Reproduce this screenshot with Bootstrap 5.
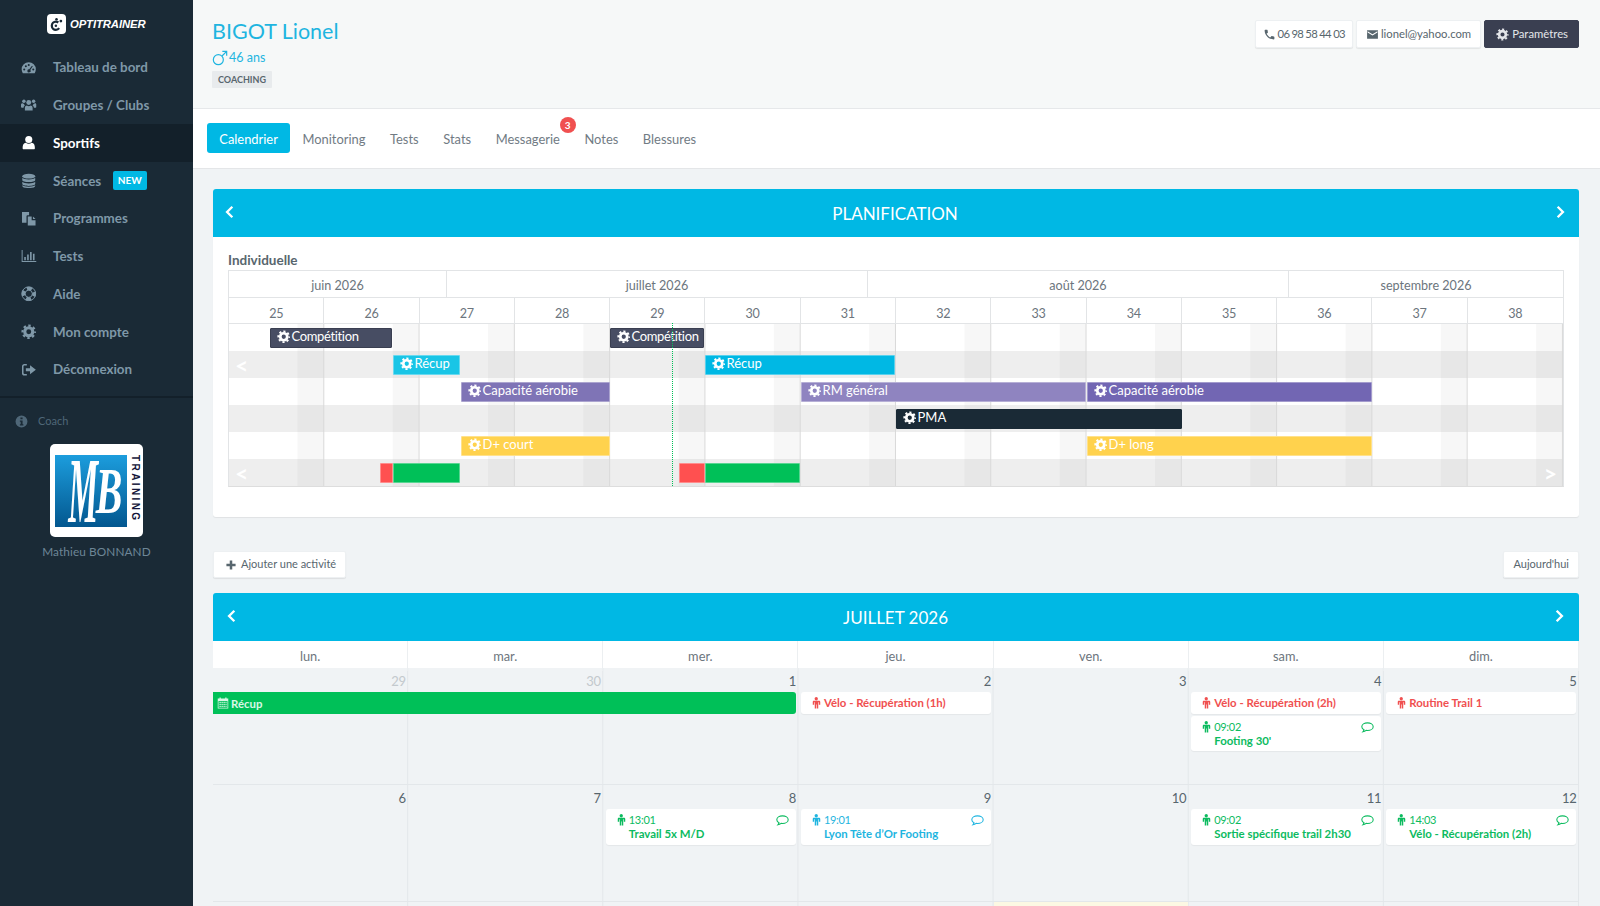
<!DOCTYPE html>
<html lang="fr">
<head>
<meta charset="UTF-8">
<title>Optitrainer - Calendrier</title>
<link href="https://cdn.jsdelivr.net/npm/bootstrap@5.3.3/dist/css/bootstrap.min.css" rel="stylesheet">
<style>
    html, body { height: 100%; }
    body { font-family: Lato, "Noto Sans", sans-serif; font-size: 14px; color: #58666e; background: #f0f3f5; overflow: hidden; }
    .ico { width: 1em; height: 1em; fill: currentColor; flex: none; }
    .ico-fig { width: 9px; height: 12px; fill: currentColor; flex: none; }
    .page { height: 906px; }

    /* sidebar */
    .side { width: 193px; flex: none; background: #1a2a36; color: #7f98a8; }
    .brand { height: 48.5px; padding-top: 14px; padding-left: 47px; gap: 4px; }
    .brand-mark { width: 19px; height: 20px; background: #fff; border-radius: 4px; color: #1a2a36; font-size: 15px; }
    .brand-name { color: #fff; font: italic bold 11.3px/20px "Liberation Sans", sans-serif; letter-spacing: -.1px; }
    .side-link { height: 37.75px; padding: 0 0 0 21px; color: #7f98a8; font-weight: 700; font-size: 13.4px; gap: 16.5px; }
    .side-link:hover { color: #7f98a8; }
    .side-link .ico { font-size: 15.5px; }
    .side-link.on { background: #13202a; color: #fff; }
    .new-tag { background: #00b8e4; color: #fff; font-size: 10px; padding: 2px 5px; border-radius: 2px; margin-left: -5px; }
    .side-nav { padding-bottom: 8px; border-bottom: 2px solid #13202a; }
    .coach-label { padding: 14px 0 0 15px; gap: 10px; font-size: 11px; line-height: 18px; color: #4f6778; }
    .coach-label .ico { font-size: 13px; }
    .mb-box { width: 93px; height: 93px; background: #fff; border-radius: 5px; margin: 14px auto 0; padding: 11px 3px 10px 5px; gap: 3px; }
    .mb-blue { width: 72px; height: 72px; background: linear-gradient(#1c9ddd, #03578f); color: #fff; font-family: "Liberation Serif", serif; font-style: italic; font-weight: 700; padding-left: 7px; gap: 5px; }
    .mb-m, .mb-b { display: inline-block; width: 28px; line-height: 1; text-align: center; }
    .mb-m { font-size: 60px; transform: scale(.56, 1.55); }
    .mb-b { font-size: 38px; transform: scale(1.05, 1.7); }
    .mb-word { writing-mode: vertical-rl; font: bold 10px/10px "Liberation Sans", sans-serif; color: #14163a; letter-spacing: 2.4px; white-space: nowrap; }
    .coach-name { font-size: 11.8px; letter-spacing: .1px; color: #6d8696; margin-top: 6px; }

    /* header */
    .top-head { height: 109px; background: #f6f8f8; border-bottom: 1px solid #e6e8ea; padding: 18px 21px 0 19px; }
    .athlete { color: #1fb5e0; font-size: 21.5px; line-height: 27px; }
    .athlete-age { color: #1fb5e0; font-size: 12.5px; line-height: 18px; margin-top: 4px; gap: 1px; }
    .athlete-age .ico { font-size: 16px; }
    .coach-tag { background: #e8ebed; color: #58666e; font-size: 9px; font-weight: 700; padding: 2px 6px; line-height: 13px; border-radius: 1px; margin-top: 2px; display: inline-block; }
    .head-btns { gap: 3px; margin-top: 2px; }
    .btn-plain { background: #fff; border: 1px solid #edf0f2; box-shadow: 0 1px 1px rgba(0,0,0,.08); color: #58666e; font-size: 11.3px; height: 28px; padding: 0 9px; border-radius: 2px; gap: 2px; }
    .btn-plain .ico { font-size: 13px; }
    .btn-tel { padding: 0 7px; letter-spacing: -.7px; }
    .btn-slate { background: #3a3f51; border: 1px solid #3a3f51; color: #e4e6ea; font-size: 11.3px; height: 28px; padding: 0 10px 0 11px; border-radius: 2px; gap: 3px; }
    .btn-slate .ico { font-size: 13px; }
    .btn-slate:hover { background: #3a3f51; color: #fff; }
    .btn-plain:hover { background: #fff; color: #58666e; }

    /* tabs */
    .tabs-strip { height: 60px; background: #fff; border-bottom: 1px solid #e4e6e8; padding: 14px 0 0 14px; }
    .tab-link { color: #717b84; font-size: 12.9px; padding: 0 12.3px; height: 30px; line-height: 32px; border-radius: 3px; position: relative; }
    .tab-link.on { background: #00b8e4; color: #fff; }
    .tab-count { position: absolute; top: -6px; right: -3.5px; width: 16px; height: 16px; border-radius: 50%; background: #f05050; color: #fff; font-size: 10px; font-weight: 700; line-height: 16px; text-align: center; }

    /* cards */
    .work { padding: 20px 21px 0 20px; }
    .blue-head { height: 48px; background: #00b8e4; color: #fff; font-size: 17px; border-radius: 3px 3px 0 0; padding: 2px 12px 0 10px; }
    .blue-head .ico { font-size: 14px; stroke: #fff; fill: none; stroke-width: 4; margin-top: -5px; }
    .cal-head { padding: 2px 13px 0 12px; }
    .plan-card { background: #fff; border-radius: 3px; box-shadow: 0 1px 1px rgba(0,0,0,.07); }
    .plan-body { padding: 14px 15px 30px; }
    .plan-title { font-weight: 700; font-size: 13.5px; line-height: 19px; }

    /* gantt */
    .gantt { border: 1px solid #e2e4e6; border-bottom-color: #ddd; color: #6c757d; font-size: 12.6px; }
    .g-months { display: grid; grid-template-columns: 218px 421px 421px 1fr; height: 27px; border-bottom: 1px solid #e2e4e6; }
    .g-weeks { display: grid; grid-template-columns: repeat(14, 1fr); height: 26px; border-bottom: 1px solid #e2e4e6; letter-spacing: -.3px; }
    .g-months > div, .g-weeks > div { text-align: center; line-height: 20px; padding-top: 5px; border-right: 1px solid #e2e4e6; }
    .g-weeks > div { padding-top: 6px; }
    .g-months > div:last-child, .g-weeks > div:last-child { border-right: 0; }
    .g-rows { position: relative; }
    .g-row { height: 27px; position: relative; background-image: linear-gradient(to right, transparent 71.4%, rgba(0,0,0,.03) 71.4%), linear-gradient(to right, transparent calc(100% - 1px), #e0e0e0 calc(100% - 1px)); background-size: calc(100% / 14) 100%; }
    .g-row:nth-child(odd) { background-color: #eee; }
    .g-today { position: absolute; left: 443px; top: -1px; bottom: 0; border-left: 1px dotted #00c058; z-index: 2; }
    .g-bar { position: absolute; top: 3.5px; height: 20px; color: #fff; font-size: 13px; line-height: 15px; padding-left: 5.5px; border: 1px solid rgba(255,255,255,.35); border-radius: 1px; white-space: nowrap; overflow: hidden; gap: 1.5px; z-index: 1; }
    .g-bar .ico { font-size: 13.5px; margin-top: 1px; }
    .g-arrow { position: absolute; top: 2px; color: #fff; font-weight: 700; font-size: 23px; line-height: 25px; }
    .b-slate { background: #474d63; border-color: #3a3f51; letter-spacing: -.35px; }
    .b-sky { background: #19c5e6; }
    .b-blue { background: #00b8e4; }
    .b-violet { background: #7f74b6; }
    .b-lilac { background: #8f84c0; }
    .b-purple { background: #7266b3; }
    .b-navy { background: #1a2a36; border-color: #1a2a36; }
    .b-yellow { background: #ffd24d; }
    .b-green { background: #00c058; }
    .b-red { background: #ff5050; }

    /* toolbar */
    .tool-row { margin-top: 34px; margin-bottom: 15px; }
    .tool-row .btn-plain { height: 27px; gap: 5px; font-size: 11px; }
    .tool-row .ico { font-size: 10px; }
    .tool-row .tool-add { padding-left: 12px; }

    /* month calendar */
    .dow { display: grid; grid-template-columns: repeat(7, 1fr); height: 27px; background: #fff; color: #6c757d; font-size: 12.8px; }
    .dow > div { text-align: center; line-height: 30px; border-right: 1px solid #eceff1; }
    .week { display: grid; grid-template-columns: repeat(7, 1fr); grid-template-rows: 22px 22px 35px; row-gap: 2px; align-content: start; height: 117px; border-bottom: 1px solid #e3e7ea; background-image: linear-gradient(to right, transparent calc(100% - 1px), #e3e7ea calc(100% - 1px)); background-size: calc(100% / 7) 100%; }
    .day-num { grid-row: 1; text-align: right; padding: 3.5px 2.5px 0 0; font-size: 13px; line-height: 19px; letter-spacing: -.3px; color: #58666e; }
    .day-num.off { color: #c3c9cd; }
    .c1 { grid-column: 1; } .c2 { grid-column: 2; } .c3 { grid-column: 3; } .c4 { grid-column: 4; }
    .c5 { grid-column: 5; } .c6 { grid-column: 6; } .c7 { grid-column: 7; }
    .ev { grid-row: 2; background: #fff; margin: 0 2.5px; border-radius: 3px; box-shadow: 0 1px 1px rgba(0,0,0,.05); font-size: 11.4px; padding: 0 7px 0 11px; }
    .ev-line { font-weight: 700; line-height: 22px; gap: 3px; }
    .ev-two { grid-row: 2 / span 2; height: 36px; padding-top: 4px; line-height: 14px; }
    .ev-low { grid-row: 3; height: 35px; }
    .ev-time { letter-spacing: -.3px; font-size: 11px; gap: 3px; }
    .ev-time .ico-cm { font-size: 13px; }
    .ev-red { color: #f05050; }
    .ev-green { color: #0cbb5f; }
    .ev-sky { color: #1fb5e0; }
    .ev-name { font-weight: 700; margin-left: 12px; white-space: nowrap; }
    .ev-bar { grid-column: 1 / 4; grid-row: 2; background: #00c058; color: #d9f7e6; margin-right: 2.5px; border-radius: 0 3px 3px 0; font-size: 11.4px; font-weight: 700; line-height: 21px; padding-left: 4px; gap: 2px; }
    .ev-bar .ico { font-size: 12px; }
    .today-cell { grid-column: 5; grid-row: 1 / 4; background: #fcf8e3; margin-right: 1px; }
</style>
</head>
<body>

<svg width="0" height="0" class="position-absolute">
    <symbol id="i-logo" viewBox="0 0 24 24"><circle cx="11" cy="14" r="6.5" fill="none" stroke="currentColor" stroke-width="3.6" stroke-dasharray="30 11" stroke-dashoffset="-4"/><circle cx="11" cy="14" r="2"/><circle cx="12" cy="3.500" r="2"/><circle cx="19" cy="6.500" r="2.200"/></symbol>
    <symbol id="i-gear" viewBox="0 0 24 24"><circle cx="12" cy="12" r="6.2" fill="none" stroke="currentColor" stroke-width="4.8"/><circle cx="12" cy="12" r="9.6" fill="none" stroke="currentColor" stroke-width="3.4" stroke-dasharray="3.77 3.77" stroke-dashoffset="1.88"/></symbol>
    <symbol id="i-gauge" viewBox="0 0 24 24"><path fill-rule="evenodd" d="M12 3.500A11 11 0 0 0 1 14.500c0 2.200.7 4.300 1.800 6h18.400c1.100-1.700 1.800-3.800 1.800-6a11 11 0 0 0-11-11zM5 13a1.600 1.600 0 1 1 0 3.200A1.600 1.600 0 0 1 5 13zm2.500-4.800a1.600 1.600 0 1 1 0 3.200 1.600 1.600 0 0 1 0-3.200zM12 6a1.600 1.600 0 1 1 0 3.200A1.600 1.600 0 0 1 12 6zm5 2.800 1.200.9-3.800 5.600a2.500 2.500 0 1 1-1.500-1zM19 13a1.600 1.600 0 1 1 0 3.200 1.600 1.600 0 0 1 0-3.200z"/></symbol>
    <symbol id="i-users" viewBox="0 0 24 24"><circle cx="12" cy="8.500" r="3.800"/><circle cx="4.500" cy="6.500" r="2.700"/><circle cx="19.500" cy="6.500" r="2.700"/><path d="M6 21v-4.500C6 14 8 13 9 13c1 .8 2 1.200 3 1.200s2-.4 3-1.200c1 0 3 1 3 3.500V21zM0 15v-3.200C0 10 1.500 9.500 2.500 9.500c.7.600 1.500.8 2 .8a5 5 0 0 0 1.700 2.700C4.800 13.500 4 15 4 16.500H1.500C.5 16.500 0 16 0 15zm24 0v-3.200c0-1.800-1.500-2.300-2.500-2.300-.7.600-1.500.8-2 .8a5 5 0 0 1-1.700 2.700c1.400.500 2.200 2 2.200 3.500h2.500c1 0 1.500-.5 1.500-1.500z"/></symbol>
    <symbol id="i-user" viewBox="0 0 24 24"><circle cx="12" cy="7" r="5.500"/><path d="M4 22c-1 0-1.500-.8-1.500-2 0-4.500 1.500-8 5-8 1.200 1 2.800 1.600 4.500 1.600s3.300-.6 4.500-1.600c3.500 0 5 3.500 5 8 0 1.200-.5 2-1.500 2z"/></symbol>
    <symbol id="i-db" viewBox="0 0 24 24"><ellipse cx="12" cy="5" rx="10" ry="3.700"/><path d="M2 7.500v3.200C2 12.700 6.500 14 12 14s10-1.300 10-3.300V7.500c-1.500 1.700-5.500 2.600-10 2.600S3.500 9.200 2 7.500zm0 6v3.200c0 2 4.500 3.300 10 3.300s10-1.300 10-3.300v-3.200c-1.500 1.700-5.500 2.600-10 2.600s-8.500-.9-10-2.600z"/><path d="M2 19v1c0 2 4.500 3.300 10 3.300s10-1.300 10-3.300v-1c-1.500 1.400-5.500 2.200-10 2.200S3.500 20.400 2 19z"/></symbol>
    <symbol id="i-files" viewBox="0 0 24 24"><path fill-rule="evenodd" d="M1.500 1.500h11v5h-2.500c-1 0-1.500.5-1.500 1.500v10h-7zM10.500 8.500h6v6h6v8h-12zm8 0 4 4h-4z"/></symbol>
    <symbol id="i-bars" viewBox="0 0 24 24"><path d="M1 3h1.500v17H24v1.500H1z"/><path d="M5 14h2.500v5H5zM9.500 10H12v9H9.500zM14 6h2.500v13H14zM18.500 9H21v10h-2.500z"/></symbol>
    <symbol id="i-ring" viewBox="0 0 24 24"><circle cx="12" cy="12" r="8.200" fill="none" stroke="currentColor" stroke-width="5.500" stroke-dasharray="7.900 5" stroke-dashoffset="4"/><circle cx="12" cy="12" r="10.700" fill="none" stroke="currentColor" stroke-width="1.400"/><circle cx="12" cy="12" r="5.600" fill="none" stroke="currentColor" stroke-width="1.400"/></symbol>
    <symbol id="i-out" viewBox="0 0 24 24"><path d="M9 3H5.500A4 4 0 0 0 1.500 7v10a4 4 0 0 0 4 4H9v-2.400H5.500A1.700 1.700 0 0 1 3.900 17V7c0-.9.700-1.600 1.600-1.600H9z"/><path d="M14 5v4.500H7.500v5H14V19l9-7z"/></symbol>
    <symbol id="i-info" viewBox="0 0 24 24"><path fill-rule="evenodd" d="M12 1a11 11 0 1 0 0 22 11 11 0 0 0 0-22zm-2 3.500h4v3.500h-4zM9 10h5v7h1.500v2.500h-6.500V17h1.500v-4.500H9z"/></symbol>
    <symbol id="i-phone" viewBox="0 0 24 24"><path d="M6.620 10.790c1.440 2.830 3.760 5.140 6.590 6.590l2.200-2.200c.27-.27.67-.36 1.020-.24 1.120.37 2.330.57 3.570.57.55 0 1 .45 1 1V20c0 .55-.45 1-1 1-9.390 0-17-7.610-17-17 0-.55.45-1 1-1h3.500c.55 0 1 .45 1 1 0 1.250.2 2.450.57 3.570.11.35.03.74-.25 1.020l-2.200 2.200z"/></symbol>
    <symbol id="i-mail" viewBox="0 0 24 24"><path d="M22 4H2v16h20zm0 0M21 8.500l-9 5.500-9-5.500V6l9 5.500L21 6z" fill-rule="evenodd"/></symbol>
    <symbol id="i-plus" viewBox="0 0 24 24"><path d="M9 1h6v8h8v6h-8v8H9v-8H1V9h8z"/></symbol>
    <symbol id="i-left" viewBox="0 0 24 24"><path d="M16 3 7 12l9 9"/></symbol>
    <symbol id="i-right" viewBox="0 0 24 24"><path d="m8 3 9 9-9 9"/></symbol>
    <symbol id="i-cal" viewBox="0 0 24 24"><path fill-rule="evenodd" d="M5 1h2.500v2h9V1H19v2h3.500v20h-21V3H5zM3 8v13.500h18V8zm2 1.500h2.500V12H5zm4 0h2.500V12H9zm4 0h2.500V12H13zm4 0h2V12h-2zM5 13.500h2.500V16H5zm4 0h2.500V16H9zm4 0h2.500V16H13zm4 0h2V16h-2zM5 17.500h2.500V20H5zm4 0h2.500V20H9zm4 0h2.500V20H13zm4 0h2V20h-2z"/></symbol>
    <symbol id="i-male" viewBox="4 0 17 24"><circle cx="12" cy="3.500" r="3.300"/><path d="M6.500 7.500h11c1.400 0 2.500 1 2.500 2.500v5.500h-2.800v-5h-1.200V23h-2.900v-8h-1.200v8H9V10.500H7.800v5H5V10c0-1.500 1-2.500 1.500-2.500z"/></symbol>
    <symbol id="i-comment" viewBox="0 0 24 24"><path fill="none" stroke="currentColor" stroke-width="2" d="M12 3.500c5.800 0 10.500 3 10.500 7s-4.700 7-10.500 7c-.9 0-1.700-.1-2.500-.2-1.500 1.200-3.500 2.200-6 2.700 1-1.200 1.800-2.500 2-4-2.500-1.300-4-3.200-4-5.500 0-4 4.700-7 10.500-7z"/></symbol>
    <symbol id="i-mars" viewBox="0 0 24 24"><circle cx="9.500" cy="14.500" r="7.500" fill="none" stroke="currentColor" stroke-width="1.800"/><path fill="none" stroke="currentColor" stroke-width="1.800" d="M15 9 22 2m-6.500 0H22v6.500"/></symbol>
</svg>

<div class="page d-flex">
    <aside class="side">
        <div class="brand d-flex align-items-start">
            <span class="brand-mark d-flex align-items-center justify-content-center"><svg class="ico"><use href="#i-logo"/></svg></span>
            <span class="brand-name">OPTITRAINER</span>
        </div>
        <nav class="side-nav nav flex-column">
            <a class="nav-link side-link d-flex align-items-center" href="#"><svg class="ico"><use href="#i-gauge"/></svg>Tableau de bord</a>
            <a class="nav-link side-link d-flex align-items-center" href="#"><svg class="ico"><use href="#i-users"/></svg>Groupes / Clubs</a>
            <a class="nav-link side-link on d-flex align-items-center" href="#"><svg class="ico"><use href="#i-user"/></svg>Sportifs</a>
            <a class="nav-link side-link d-flex align-items-center" href="#"><svg class="ico"><use href="#i-db"/></svg>Séances <span class="new-tag">NEW</span></a>
            <a class="nav-link side-link d-flex align-items-center" href="#"><svg class="ico"><use href="#i-files"/></svg>Programmes</a>
            <a class="nav-link side-link d-flex align-items-center" href="#"><svg class="ico"><use href="#i-bars"/></svg>Tests</a>
            <a class="nav-link side-link d-flex align-items-center" href="#"><svg class="ico"><use href="#i-ring"/></svg>Aide</a>
            <a class="nav-link side-link d-flex align-items-center" href="#"><svg class="ico"><use href="#i-gear"/></svg>Mon compte</a>
            <a class="nav-link side-link d-flex align-items-center" href="#"><svg class="ico"><use href="#i-out"/></svg>Déconnexion</a>
        </nav>
        <div class="coach-label d-flex align-items-center"><svg class="ico"><use href="#i-info"/></svg>Coach</div>
        <div class="mb-box d-flex">
            <div class="mb-blue d-flex align-items-center"><span class="mb-m">M</span><span class="mb-b">B</span></div>
            <div class="mb-word">TRAINING</div>
        </div>
        <div class="coach-name text-center">Mathieu BONNAND</div>
    </aside>

    <main class="flex-grow-1 overflow-hidden">
        <header class="top-head d-flex justify-content-between align-items-start">
            <div>
                <div class="athlete">BIGOT Lionel</div>
                <div class="athlete-age d-flex align-items-center"><svg class="ico"><use href="#i-mars"/></svg>46 ans</div>
                <span class="coach-tag">COACHING</span>
            </div>
            <div class="head-btns d-flex">
                <a class="btn btn-plain btn-tel d-flex align-items-center" href="#"><svg class="ico"><use href="#i-phone"/></svg>06 98 58 44 03</a>
                <a class="btn btn-plain d-flex align-items-center" href="#"><svg class="ico"><use href="#i-mail"/></svg>lionel@yahoo.com</a>
                <a class="btn btn-slate d-flex align-items-center" href="#"><svg class="ico"><use href="#i-gear"/></svg>Paramètres</a>
            </div>
        </header>

        <div class="tabs-strip d-flex">
            <a class="tab-link on text-decoration-none" href="#">Calendrier</a>
            <a class="tab-link text-decoration-none" href="#">Monitoring</a>
            <a class="tab-link text-decoration-none" href="#">Tests</a>
            <a class="tab-link text-decoration-none" href="#">Stats</a>
            <a class="tab-link text-decoration-none" href="#">Messagerie<span class="tab-count">3</span></a>
            <a class="tab-link text-decoration-none" href="#">Notes</a>
            <a class="tab-link text-decoration-none" href="#">Blessures</a>
        </div>

        <div class="work">
            <section class="plan-card">
                <div class="blue-head d-flex align-items-center justify-content-between">
                    <svg class="ico"><use href="#i-left"/></svg>
                    <span>PLANIFICATION</span>
                    <svg class="ico"><use href="#i-right"/></svg>
                </div>
                <div class="plan-body">
                    <div class="plan-title">Individuelle</div>
                    <div class="gantt">
                        <div class="g-months">
                            <div>juin 2026</div><div>juillet 2026</div><div>août 2026</div><div>septembre 2026</div>
                        </div>
                        <div class="g-weeks">
                            <div>25</div><div>26</div><div>27</div><div>28</div><div>29</div><div>30</div><div>31</div>
                            <div>32</div><div>33</div><div>34</div><div>35</div><div>36</div><div>37</div><div>38</div>
                        </div>
                        <div class="g-rows">
                            <div class="g-today"></div>
                            <div class="g-row">
                                <div class="g-bar b-slate d-flex" style="left:41px;width:122px"><svg class="ico"><use href="#i-gear"/></svg>Compétition</div>
                                <div class="g-bar b-slate d-flex" style="left:381px;width:94px"><svg class="ico"><use href="#i-gear"/></svg>Compétition</div>
                            </div>
                            <div class="g-row">
                                <span class="g-arrow" style="left:6px">&lt;</span>
                                <div class="g-bar b-sky d-flex" style="left:164px;width:67px"><svg class="ico"><use href="#i-gear"/></svg>Récup</div>
                                <div class="g-bar b-blue d-flex" style="left:476px;width:190px"><svg class="ico"><use href="#i-gear"/></svg>Récup</div>
                            </div>
                            <div class="g-row">
                                <div class="g-bar b-violet d-flex" style="left:232px;width:149px"><svg class="ico"><use href="#i-gear"/></svg>Capacité aérobie</div>
                                <div class="g-bar b-lilac d-flex" style="left:572px;width:285px"><svg class="ico"><use href="#i-gear"/></svg>RM général</div>
                                <div class="g-bar b-purple d-flex" style="left:858px;width:285px"><svg class="ico"><use href="#i-gear"/></svg>Capacité aérobie</div>
                            </div>
                            <div class="g-row">
                                <div class="g-bar b-navy d-flex" style="left:667px;width:286px"><svg class="ico"><use href="#i-gear"/></svg>PMA</div>
                            </div>
                            <div class="g-row">
                                <div class="g-bar b-yellow d-flex" style="left:232px;width:149px"><svg class="ico"><use href="#i-gear"/></svg>D+ court</div>
                                <div class="g-bar b-yellow d-flex" style="left:858px;width:285px"><svg class="ico"><use href="#i-gear"/></svg>D+ long</div>
                            </div>
                            <div class="g-row">
                                <span class="g-arrow" style="left:6px">&lt;</span>
                                <div class="g-bar b-red" style="left:151px;width:13px"></div>
                                <div class="g-bar b-green" style="left:164px;width:67px"></div>
                                <div class="g-bar b-red" style="left:450px;width:26px"></div>
                                <div class="g-bar b-green" style="left:476px;width:95px"></div>
                                <span class="g-arrow" style="right:6px">&gt;</span>
                            </div>
                        </div>
                    </div>
                </div>
            </section>

            <div class="tool-row d-flex justify-content-between">
                <a class="btn btn-plain tool-add d-flex align-items-center" href="#"><svg class="ico"><use href="#i-plus"/></svg>Ajouter une activité</a>
                <a class="btn btn-plain d-flex align-items-center" href="#">Aujourd'hui</a>
            </div>

            <section>
                <div class="blue-head cal-head d-flex align-items-center justify-content-between">
                    <svg class="ico"><use href="#i-left"/></svg>
                    <span>JUILLET 2026</span>
                    <svg class="ico"><use href="#i-right"/></svg>
                </div>
                <div class="dow">
                    <div>lun.</div><div>mar.</div><div>mer.</div><div>jeu.</div><div>ven.</div><div>sam.</div><div>dim.</div>
                </div>
                <div class="week">
                    <div class="day-num off c1">29</div>
                    <div class="day-num off c2">30</div>
                    <div class="day-num c3">1</div>
                    <div class="day-num c4">2</div>
                    <div class="day-num c5">3</div>
                    <div class="day-num c6">4</div>
                    <div class="day-num c7">5</div>
                    <div class="ev-bar d-flex align-items-center"><svg class="ico"><use href="#i-cal"/></svg>Récup</div>
                    <div class="ev ev-line ev-red c4 d-flex align-items-center"><svg class="ico-fig"><use href="#i-male"/></svg>Vélo - Récupération (1h)</div>
                    <div class="ev ev-line ev-red c6 d-flex align-items-center"><svg class="ico-fig"><use href="#i-male"/></svg>Vélo - Récupération (2h)</div>
                    <div class="ev ev-line ev-red c7 d-flex align-items-center"><svg class="ico-fig"><use href="#i-male"/></svg>Routine Trail 1</div>
                    <div class="ev ev-low ev-two ev-green c6">
                        <div class="ev-time d-flex align-items-center"><svg class="ico-fig"><use href="#i-male"/></svg>09:02<svg class="ico ico-cm ms-auto"><use href="#i-comment"/></svg></div>
                        <div class="ev-name">Footing 30'</div>
                    </div>
                </div>
                <div class="week">
                    <div class="day-num c1">6</div>
                    <div class="day-num c2">7</div>
                    <div class="day-num c3">8</div>
                    <div class="day-num c4">9</div>
                    <div class="day-num c5">10</div>
                    <div class="day-num c6">11</div>
                    <div class="day-num c7">12</div>
                    <div class="ev ev-two ev-green c3">
                        <div class="ev-time d-flex align-items-center"><svg class="ico-fig"><use href="#i-male"/></svg>13:01<svg class="ico ico-cm ms-auto"><use href="#i-comment"/></svg></div>
                        <div class="ev-name">Travail 5x M/D</div>
                    </div>
                    <div class="ev ev-two ev-sky c4">
                        <div class="ev-time d-flex align-items-center"><svg class="ico-fig"><use href="#i-male"/></svg>19:01<svg class="ico ico-cm ms-auto"><use href="#i-comment"/></svg></div>
                        <div class="ev-name">Lyon Tête d’Or Footing</div>
                    </div>
                    <div class="ev ev-two ev-green c6">
                        <div class="ev-time d-flex align-items-center"><svg class="ico-fig"><use href="#i-male"/></svg>09:02<svg class="ico ico-cm ms-auto"><use href="#i-comment"/></svg></div>
                        <div class="ev-name">Sortie spécifique trail 2h30</div>
                    </div>
                    <div class="ev ev-two ev-green c7">
                        <div class="ev-time d-flex align-items-center"><svg class="ico-fig"><use href="#i-male"/></svg>14:03<svg class="ico ico-cm ms-auto"><use href="#i-comment"/></svg></div>
                        <div class="ev-name">Vélo - Récupération (2h)</div>
                    </div>
                </div>
                <div class="week">
                    <div class="today-cell"></div>
                </div>
            </section>
        </div>
    </main>
</div>

<script src="https://cdn.jsdelivr.net/npm/bootstrap@5.3.3/dist/js/bootstrap.bundle.min.js"></script>
</body>
</html>
